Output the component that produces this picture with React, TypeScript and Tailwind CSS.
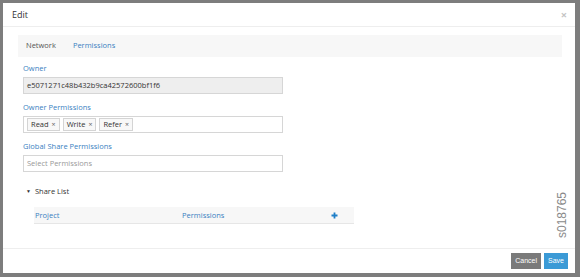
import React from 'react';

const Tag = ({ label }: { label: string }) => (
  <span className="flex h-[13px] items-center gap-[3px] border border-[#d4d4d4] bg-[#f8f8f8] px-[3px] text-[7.5px] text-[#333]">
    {label}
    <span className="text-[7px] leading-none text-[#666]">×</span>
  </span>
);

const Label = ({ children }: { children: React.ReactNode }) => (
  <p className="text-[7.5px] leading-[10px] text-[#3a7fc1]">{children}</p>
);

export default function App() {
  return (
    <div className="h-[277px] w-[580px] bg-[#7d7d7d] p-[3px] pr-[5px] pb-[4px] font-['Open_Sans',sans-serif]">
      <div className="relative flex h-full w-full flex-col bg-white">
        <div className="flex h-[24px] items-center justify-between border-b border-[#eeeeee] pl-[9px] pr-[8px]">
          <span className="text-[9px] text-[#333]">Edit</span>
          <span className="text-[11px] font-bold leading-none text-[#c4c4c4]">×</span>
        </div>

        <div className="flex-1 pl-[15px] pr-[13px] pt-[8px]">
          <div className="flex h-[22px] items-center gap-[17px] bg-[#f7f7f7] px-[8px] text-[7.5px]">
            <span className="text-[#555]">Network</span>
            <span className="text-[#3a7fc1]">Permissions</span>
          </div>

          <div className="pl-[5px] pt-[6px]">
            <Label>Owner</Label>
            <div className="mt-[4px] flex h-[17px] w-[260px] items-center border border-[#d6d6d6] bg-[#eeeeee] px-[3px] text-[7.5px] text-[#333]">
              e5071271c48b432b9ca42572600bf1f6
            </div>

            <div className="mt-[8px]">
              <Label>Owner Permissions</Label>
            </div>
            <div className="mt-[4px] flex h-[17px] w-[260px] items-center gap-[3px] border border-[#d6d6d6] bg-white px-[3px]">
              <Tag label="Read" />
              <Tag label="Write" />
              <Tag label="Refer" />
            </div>

            <div className="mt-[8px]">
              <Label>Global Share Permissions</Label>
            </div>
            <div className="mt-[4px] flex h-[17px] w-[260px] items-center border border-[#d6d6d6] bg-white px-[3px] text-[7.5px] text-[#999]">
              Select Permissions
            </div>

            <div className="mt-[14px] flex items-center gap-[4px] pl-[3px] text-[7.5px] text-[#333]">
              <span className="text-[5px] leading-none">▼</span>
              <span>Share List</span>
            </div>

            <div className="ml-[11px] mt-[10px] flex h-[17px] w-[320px] items-center border-b border-[#e6e6e6] bg-[#f7f7f7] text-[7.5px] text-[#3a7fc1]">
              <span className="w-[148px] pl-[1px]">Project</span>
              <span className="flex-1">Permissions</span>
              <svg width="7" height="7" viewBox="0 0 7 7" className="mr-[16px]">
                <path d="M3.5 0.5v6M0.5 3.5h6" stroke="#1f7fc8" strokeWidth="1.8" />
              </svg>
            </div>
          </div>
        </div>

        <div className="flex h-[25px] items-center justify-end gap-[3px] border-t border-[#eeeeee] pr-[7px]">
          <button className="h-[16px] bg-[#7a7a7a] px-[4px] font-['Liberation_Sans',sans-serif] text-[7px] text-white">
            Cancel
          </button>
          <button className="h-[16px] bg-[#3b9ad6] px-[4px] font-['Liberation_Sans',sans-serif] text-[7px] text-white">
            Save
          </button>
        </div>

        <span className="absolute right-[4px] top-[206px] origin-center -rotate-90 font-['Liberation_Sans',sans-serif] text-[12px] leading-none text-[#8a8a8a] translate-x-[14px]">
          s018765
        </span>
      </div>
    </div>
  );
}
